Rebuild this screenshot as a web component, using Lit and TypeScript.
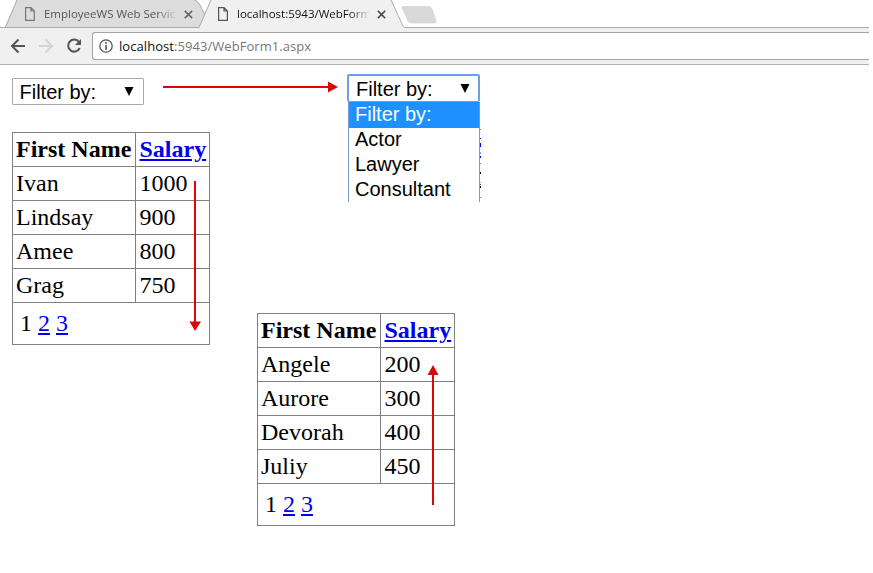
import { LitElement, html, svg, css } from "lit";
import { customElement, property } from "lit/decorators.js";

const pageIcon = html`<svg class="file" width="10" height="14" viewBox="0 0 10 14"><path d="M.6.6H6L9.4 4V13.4H.6ZM6 .6V4H9.4" fill="none" stroke="currentColor" stroke-width="1.2"/></svg>`;
const closeIcon = html`<svg class="close" width="9" height="9" viewBox="0 0 9 9"><path d="M.8.8 8.2 8.2M8.2.8.8 8.2" stroke="currentColor" stroke-width="1.6"/></svg>`;

@customElement("browser-chrome")
export class BrowserChrome extends LitElement {
  static styles = css`
    :host { display: block; height: 65px; width: 869px; font-family: "Open Sans", "Noto Sans", sans-serif; }
    .strip { position: relative; height: 28px; }
    .shapes { position: absolute; left: 0; top: 0; }
    .tabs { position: relative; display: flex; height: 28px; font-size: 12px; }
    .tab { display: flex; align-items: center; height: 28px; box-sizing: border-box; }
    .first { width: 193px; padding-left: 25px; color: #777; }
    .second { width: 210px; padding-left: 25px; color: #555; }
    .title { width: 132px; margin-left: 9px; overflow: hidden; white-space: nowrap; color: #555; font-size: 11.5px; line-height: 20px;
      -webkit-mask-image: linear-gradient(to right, #000 112px, transparent 134px); }
    .second .title { color: #111; }
    .close { margin-left: 9px; color: #666; }
    .second .close { margin-left: 8px; color: #444; }
    .bar { height: 37px; box-sizing: border-box; display: flex; align-items: center; background: #f0f0f0; border-bottom: 1px solid #b0b0b0; }
    .nav { flex: none; width: 92px; height: 28px; }
    .address { flex: 1; height: 28px; box-sizing: border-box; display: flex; align-items: center; border: 1px solid #a5a5a5; border-right: 0; border-radius: 3px 0 0 3px; background: #fff; padding-left: 6px; font-size: 13px; color: #777; white-space: nowrap; }
    .host { color: #111; }
    .url { margin-left: 6px; letter-spacing: 0.06px; }
  `;
  render() {
    return html`
      <div class="strip">
        <svg class="shapes" width="869" height="28" viewBox="0 0 869 28">
          <path d="M5 27.5 17 0H194Q198 0 202 9L206 15 199 27.5Z" fill="#dcdcdc"/>
          <path d="M5.500 27 17 0M194 0Q198 0 202 9L205 16" fill="none" stroke="#aaa"/>
          <path d="M199 28 211 0H391L403 28Z" fill="#f0f0f0"/>
          <path d="M0 27.500H199L211 0M391 0 403 26Q403.500 27.500 405 27.500H869" fill="none" stroke="#ababab"/>
          <path d="M404 6.500H428Q431 6.500 432 9L436 21Q436.500 23 434 23H412Q409 23 408 21L402 8Q401.500 6.500 404 6.500Z" fill="#d9d9d9" stroke="#cfcfcf" stroke-width=".6"/>
        </svg>
        <div class="tabs">
          <div class="tab first">${pageIcon}<span class="title">EmployeeWS Web Servic</span>${closeIcon}</div>
          <div class="tab second">${pageIcon}<span class="title">localhost:5943/WebForm</span>${closeIcon}</div>
        </div>
      </div>
      <div class="bar">
        <svg class="nav" width="92" height="28" viewBox="0 32 92 28" fill="none" stroke-width="2">
          <path d="M25 46H12.500M18.500 39.500 12 46 18.500 52.500" stroke="#555"/>
          <path d="M39 46H51.500M45.500 39.500 52 46 45.500 52.500" stroke="#d3d3d3"/>
          <path d="M79 42A6 6 0 1 0 79.700 48" stroke="#555"/>
          <path d="M81 39V45H75Z" fill="#555"/>
        </svg>
        <div class="address">
          <svg width="14" height="14" viewBox="0 0 14 14"><circle cx="7" cy="7" r="6.200" fill="none" stroke="#555" stroke-width="1.300"/><path d="M7 3V4.700M7 6V11" stroke="#555" stroke-width="1.600"/></svg>
          <span class="url"><span class="host">localhost</span>:5943/WebForm1.aspx</span>
        </div>
      </div>`;
  }
}

@customElement("filter-select")
export class FilterSelect extends LitElement {
  @property({ type: Boolean, reflect: true }) open = false;
  static styles = css`
    :host { display: block; width: 132px; font: 20px/25px "Liberation Sans", Arial, sans-serif; color: #000; }
    :host([open]) { width: 133px; }
    .box { box-sizing: border-box; height: 27px; display: flex; justify-content: space-between; align-items: center; border: 1px solid #a9a9a9; border-radius: 1px; padding: 1px 9px 0 6.5px; }
    :host([open]) .box { height: 28px; border: 2px solid #6d9eeb; border-bottom-width: 1px; border-radius: 2px; padding: 2px 8px 0 7px; }
    .list { box-sizing: border-box; width: 132px; height: 100px; border: solid #7b9bd0; border-width: 0 1px; margin-left: 1px; background: #fff; }
    .item { height: 25px; padding-left: 6px; line-height: 23px; }
    .selected { background: #1e90ff; color: #fff; height: 26px; line-height: 24px; }
    .caret { margin-bottom: 2px; }
  `;
  render() {
    return html`
      <div class="box"><span>Filter by:</span><svg class="caret" width="10" height="9" viewBox="0 0 10 9"><path d="M.5 0H9.500L5 9Z" fill="#000"/></svg></div>
      ${this.open ? html`<div class="list">
        <div class="item selected">Filter by:</div>
        ${["Actor", "Lawyer", "Consultant"].map(t => html`<div class="item">${t}</div>`)}
      </div>` : ""}`;
  }
}

@customElement("salary-table")
export class SalaryTable extends LitElement {
  @property({ attribute: false }) rows: [string, number][] = [];
  static styles = css`
    :host { display: block; width: 198px; font: 24px/27px "Liberation Serif", "Times New Roman", serif; color: #000; }
    table { border-collapse: collapse; table-layout: fixed; width: 198px; }
    .name { width: 123px; }
    th, td { border: 1px solid #808080; height: 33px; padding: 0 3px; text-align: left; white-space: nowrap; box-sizing: border-box; }
    th + th, td + td { padding-left: 3.5px; }
    tr { height: 34px; }
    .pager { height: 42px; padding: 0 7px; }
    .pages { display: flex; gap: 6px; }
    a { color: #0000ee; text-decoration: underline; }
  `;
  render() {
    return html`<table>
      <colgroup><col class="name"><col></colgroup>
      <tr><th>First Name</th><th><a>Salary</a></th></tr>
      ${this.rows.map(([n, s]) => html`<tr><td>${n}</td><td>${s}</td></tr>`)}
      <tr><td class="pager" colspan="2"><div class="pages"><span>1</span><a>2</a><a>3</a></div></td></tr>
    </table>`;
  }
}

@customElement("app-root")
export class AppRoot extends LitElement {
  static styles = css`
    :host { display: block; position: relative; width: 873px; height: 573px; overflow: hidden; background: #fff; }
    .content { display: flex; padding-left: 12px; gap: 47px; }
    .left { width: 198px; padding-top: 13px; }
    .left salary-table { margin-top: 27px; }
    .right { padding-top: 9px; }
    .menu { display: flex; margin-left: 90px; height: 239px; }
    .remnant { margin-top: 55px; }
    .arrows { position: absolute; left: 0; top: 0; }
  `;
  render() {
    const first: [string, number][] = [["Ivan", 1000], ["Lindsay", 900], ["Amee", 800], ["Grag", 750]];
    const second: [string, number][] = [["Angele", 200], ["Aurore", 300], ["Devorah", 400], ["Juliy", 450]];
    const traces: [number, number, string][] = [[0, 1, "#808080"], [9, 1, "#0000ee"], [14, 4, "#0000ee"], [23, 2, "#9a9aff"], [27, 2, "#0000ee"], [34, 1, "#808080"], [43, 2, "#000"], [53, 1, "#e4a04c"], [55, 1, "#648"], [57, 2, "#000"], [68, 1, "#808080"]];
    return html`
      <browser-chrome></browser-chrome>
      <div class="content">
        <div class="left"><filter-select></filter-select><salary-table .rows=${first}></salary-table></div>
        <div class="right">
          <div class="menu"><filter-select open></filter-select>
            <svg class="remnant" width="1" height="72" viewBox="0 0 1 72">${traces.map(([y, h, c]) => svg`<rect y=${y} width="1" height=${h} fill=${c}></rect>`)}</svg>
          </div>
          <salary-table .rows=${second}></salary-table>
        </div>
      </div>
      <svg class="arrows" width="873" height="573" viewBox="0 0 873 573" fill="#d80808">
        <path d="M163 86H328V81.500L338 87 328 92.500V88H163Z"/>
        <path d="M194 181H196V321.500H201L195 331 189.500 321.500H194Z"/>
        <path d="M432 505V375H427.500L433 365 438.500 375H434V505Z"/>
      </svg>`;
  }
}
